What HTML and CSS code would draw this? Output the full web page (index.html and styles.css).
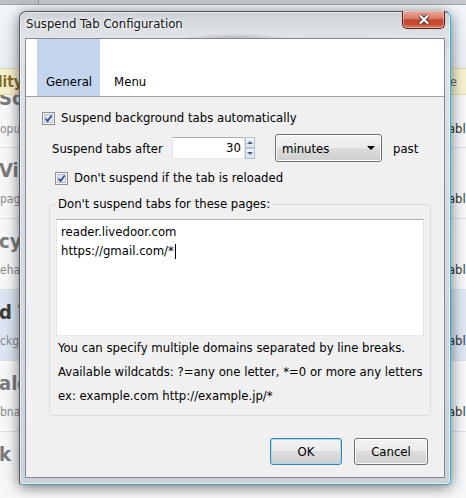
FILE: index.html
```html
<!DOCTYPE html>
<html lang="en">
<head>
    <meta charset="UTF-8">
    <meta name="viewport" content="width=device-width, initial-scale=1.0">
    <title>Suspend Tab Configuration</title>
    <link rel="stylesheet" href="styles.css">
</head>
<body>
    <!-- extensions page behind the dialog -->
    <div class="page">
        <div class="toolbar"><span class="tool"></span></div>
        <div class="blank"></div>
        <div class="notice"><span class="notice-text">lity</span><span class="notice-end">e</span></div>
        <div class="ext ext-first">
            <div class="ext-info"><div class="ext-name">Sc</div><div class="ext-desc">opu</div></div>
            <div class="ext-state">Enable</div>
        </div>
        <div class="ext">
            <div class="ext-info"><div class="ext-name">Vi</div><div class="ext-desc">pag</div></div>
            <div class="ext-state">Enable</div>
        </div>
        <div class="ext">
            <div class="ext-info"><div class="ext-name">cyl</div><div class="ext-desc">eha</div></div>
            <div class="ext-state">Enable</div>
        </div>
        <div class="ext ext-selected">
            <div class="ext-info"><div class="ext-name">d T</div><div class="ext-desc">ckg</div></div>
            <div class="ext-state">Enable</div>
        </div>
        <div class="ext">
            <div class="ext-info"><div class="ext-name">alo</div><div class="ext-desc">bna</div></div>
            <div class="ext-state">Enable</div>
        </div>
        <div class="ext">
            <div class="ext-info"><div class="ext-name">k</div></div>
        </div>
    </div>

    <div class="window">
        <div class="titlebar">
            <span class="title">Suspend Tab Configuration</span>
            <span class="close">
                <svg width="12" height="11" viewBox="0 0 12 11">
                    <path d="M2 1.5 L10 9.5 M10 1.5 L2 9.5" stroke="#4a3430" stroke-width="4.2"/>
                    <path d="M2 1.5 L10 9.5 M10 1.5 L2 9.5" stroke="#fff" stroke-width="2.2"/>
                </svg>
            </span>
        </div>
        <div class="client">
            <div class="tabs">
                <span class="tab tab-active">General</span>
                <span class="tab">Menu</span>
            </div>
            <div class="panel">
                <label class="option option-main">
                    <svg class="checkbox" width="13" height="13" viewBox="0 0 13 13">
                        <rect x="0.5" y="0.5" width="12" height="12" fill="#f6f6f6" stroke="#8f8f8f"/>
                        <rect x="2.5" y="2.5" width="8" height="8" fill="#e2e7ee" stroke="#b9c2cd"/>
                        <path d="M3.6 6.4 L5.6 9 L9.6 3.6" fill="none" stroke="#32479b" stroke-width="1.7"/>
                    </svg>
                    Suspend background tabs automatically
                </label>
                <div class="after-row">
                    <span class="after-label">Suspend tabs after</span>
                    <span class="spin">
                        <span class="spin-input">30</span>
                        <span class="spin-buttons">
                            <span class="spin-btn"><span class="arrow-up"></span></span>
                            <span class="spin-btn"><span class="arrow-down"></span></span>
                        </span>
                    </span>
                    <span class="unit-select">minutes<span class="select-arrow"></span></span>
                    <span class="past">past</span>
                </div>
                <label class="option option-sub">
                    <svg class="checkbox" width="13" height="13" viewBox="0 0 13 13">
                        <rect x="0.5" y="0.5" width="12" height="12" fill="#f6f6f6" stroke="#8f8f8f"/>
                        <rect x="2.5" y="2.5" width="8" height="8" fill="#e2e7ee" stroke="#b9c2cd"/>
                        <path d="M3.6 6.4 L5.6 9 L9.6 3.6" fill="none" stroke="#32479b" stroke-width="1.7"/>
                    </svg>
                    Don't suspend if the tab is reloaded
                </label>
                <fieldset class="exclude">
                    <legend>Don't suspend tabs for these pages:</legend>
                    <div class="exclude-list">reader.livedoor.com<br>https://gmail.com/*<span class="caret"></span></div>
                    <p class="hint">You can specify multiple domains separated by line breaks.</p>
                    <p class="hint">Available wildcatds: ?=any one letter, *=0 or more any letters</p>
                    <p class="hint">ex: example.com http://example.jp/*</p>
                </fieldset>
                <div class="buttons">
                    <button class="btn btn-ok">OK</button>
                    <button class="btn btn-cancel">Cancel</button>
                </div>
            </div>
        </div>
    </div>
</body>
</html>
```

FILE: styles.css
```css
body, html {
    margin: 0;
    height: 100%;
    overflow: hidden;
    font-family: "DejaVu Sans Condensed", "DejaVu Sans", sans-serif;
    font-size: 13px;
    color: #000;
}

/* page behind */
.page {
    height: 498px;
    display: flex;
    flex-direction: column;
    background: #f6f7f9;
    overflow: hidden;
}
.toolbar {
    height: 4px;
    flex: none;
    display: flex;
    background: #c6c9cc;
    border-bottom: 1px solid #a2a6aa;
}
.tool {
    width: 38px;
    border-right: 1px solid #8e9297;
    background: #bcc0c4;
}
.blank {
    height: 63px;
    flex: none;
    background: linear-gradient(#f3f6fa, #e8edf4);
}
.notice {
    height: 27px;
    flex: none;
    box-sizing: border-box;
    display: flex;
    justify-content: space-between;
    align-items: center;
    background: #f6f1cd;
    border-top: 1px solid #e4dba4;
    border-bottom: 1px solid #e4dba4;
    position: relative;
    z-index: 1;
}
.notice-text {
    font-weight: bold;
    font-size: 15px;
    color: #866b22;
    margin-left: -2px;
}
.notice-end {
    font-size: 13px;
    color: #666;
    margin-right: 9px;
}
.ext {
    height: 71px;
    flex: none;
    box-sizing: border-box;
    display: flex;
    justify-content: space-between;
    border-bottom: 1px solid #dde1e6;
    overflow: hidden;
}
.ext-first {
    height: 53px;
}
.ext-selected {
    background: #dce5f1;
}
.ext-info {
    padding-top: 10px;
}
.ext-first .ext-info {
    padding-top: 0;
    margin-top: -9px;
}
.ext-name {
    font-weight: bold;
    font-size: 20px;
    line-height: 24px;
    color: #7a7a7a;
    margin-left: -1px;
}
.ext-selected .ext-name {
    color: #3a3a3a;
}
.ext-desc {
    margin-top: 9px;
    line-height: 16px;
    font-size: 12px;
    color: #8a8a8a;
}
.ext-first .ext-desc {
    margin-top: 11px;
}
.ext-state {
    padding-top: 43px;
    line-height: 16px;
    font-size: 13px;
    color: #333;
    margin-right: -7px;
}
.ext-first .ext-state {
    padding-top: 26px;
}

/* dialog window */
.window {
    position: absolute;
    z-index: 2;
    left: 19px;
    top: 11px;
    width: 432px;
    height: 474px;
    box-sizing: border-box;
    padding: 0 5px 6px;
    display: flex;
    flex-direction: column;
    border: 1px solid #4f5964;
    border-right-color: #2ab6dd;
    border-bottom-color: #4f9bb8;
    border-radius: 7px 7px 3px 3px;
    background:
        radial-gradient(ellipse 70px 12px at 215px 33px, rgba(60, 60, 60, 0.55), rgba(60, 60, 60, 0)),
        radial-gradient(ellipse 150px 9px at 320px 33px, rgba(110, 110, 110, 0.35), rgba(110, 110, 110, 0)),
        linear-gradient(#cdd2d8, #e0e3e7 24px, #d5dae0 50%, #ccd2d9);
    box-shadow: inset 0 0 0 1px rgba(255, 255, 255, 0.55), 0 2px 14px rgba(0, 0, 0, 0.55);
}
.titlebar {
    height: 26px;
    flex: none;
    display: flex;
    justify-content: space-between;
    align-items: flex-start;
}
.title {
    margin: 4px 0 0 1px;
    line-height: 16px;
    color: #111;
    text-shadow: 0 0 6px #fff, 0 0 3px #fff;
}
.close {
    width: 43px;
    height: 18px;
    margin-top: -1px;
    box-sizing: border-box;
    display: flex;
    justify-content: center;
    align-items: center;
    border: 1px solid #56231b;
    border-top: none;
    border-radius: 0 0 5px 5px;
    background: linear-gradient(#eaa999, #d87b67 45%, #c3452f 52%, #c64f38 80%, #de8a6f);
    box-shadow: inset 0 0 0 1px rgba(255, 215, 205, 0.45);
}
.client {
    flex: 1;
    display: flex;
    flex-direction: column;
    border: 1px solid #858a91;
    background: #f0f0f0;
}
.tabs {
    height: 57px;
    flex: none;
    display: flex;
    padding-left: 11px;
    background: #fff;
    border-bottom: 1px solid #a0a0a0;
}
.tab {
    display: flex;
    align-items: flex-end;
    padding: 0 8px 6px 9px;
    line-height: 16px;
}
.tab + .tab {
    margin-left: 5px;
}
.tab-active {
    background: #c2d4ee;
}
.panel {
    flex: 1;
    display: flex;
    flex-direction: column;
    align-items: flex-start;
    padding: 14px 13px 0 16px;
}
.option {
    display: flex;
    align-items: center;
    gap: 6px;
    height: 14px;
    line-height: 14px;
}
.checkbox {
    flex: none;
}
.option-sub {
    margin: 9px 0 0 13px;
}
.after-row {
    display: flex;
    align-items: center;
    height: 28px;
    margin: 9px 0 0 10px;
}
.after-label {
    width: 120px;
}
.spin {
    display: flex;
    height: 22px;
}
.spin-input {
    width: 73px;
    box-sizing: border-box;
    padding-right: 3px;
    text-align: right;
    line-height: 20px;
    background: #fff;
    border: 1px solid #e2e3ea;
    border-top-color: #abadb3;
    border-bottom-color: #e3e9ef;
}
.spin-buttons {
    width: 10px;
    display: flex;
    flex-direction: column;
}
.spin-btn {
    flex: 1;
    display: flex;
    justify-content: center;
    align-items: center;
    box-sizing: border-box;
    border: 1px solid #b4c1d0;
    background: linear-gradient(#f3f6fa, #d9e3ee);
}
.arrow-up {
    border-left: 3px solid transparent;
    border-right: 3px solid transparent;
    border-bottom: 3px solid #4f6187;
}
.arrow-down {
    border-left: 3px solid transparent;
    border-right: 3px solid transparent;
    border-top: 3px solid #4f6187;
}
.unit-select {
    width: 107px;
    height: 28px;
    margin-left: 20px;
    box-sizing: border-box;
    display: flex;
    justify-content: space-between;
    align-items: center;
    padding: 0 6px;
    border: 1px solid #707070;
    border-radius: 3px;
    background: linear-gradient(#f2f2f2, #ebebeb 50%, #dddddd 50%, #cfcfcf);
    box-shadow: inset 0 0 0 1px #fcfcfc;
}
.select-arrow {
    border-left: 4px solid transparent;
    border-right: 4px solid transparent;
    border-top: 4px solid #000;
}
.past {
    margin-left: 11px;
}
.exclude {
    margin: 11px 0 0 7px;
    width: 382px;
    box-sizing: border-box;
    padding: 7px 5px 7px 6px;
    border: 1px solid #d5dfe5;
    border-radius: 3px;
}
.exclude legend {
    padding: 0 2px;
    line-height: 16px;
}
.exclude-list {
    width: 368px;
    height: 117px;
    box-sizing: border-box;
    padding: 2px 4px;
    line-height: 19px;
    background: #fff;
    border: 1px solid #dbdfe6;
    border-top-color: #abadb3;
    border-left-color: #e2e3ea;
    border-bottom-color: #e3e9ef;
}
.caret {
    display: inline-block;
    width: 1px;
    height: 15px;
    margin-left: 1px;
    vertical-align: -4px;
    background: #000;
}
.hint {
    margin: 0;
    padding-left: 2px;
    line-height: 24px;
    white-space: nowrap;
}
.buttons {
    align-self: stretch;
    display: flex;
    justify-content: flex-end;
    gap: 12px;
    margin-top: 22px;
    padding-right: 3px;
}
.btn {
    height: 27px;
    padding: 0;
    box-sizing: border-box;
    font: inherit;
    color: #000;
    border: 1px solid #707070;
    border-radius: 3px;
    background: linear-gradient(#f2f2f2, #ebebeb 50%, #dddddd 50%, #cfcfcf);
    box-shadow: inset 0 0 0 1px #fcfcfc;
}
.btn-ok {
    width: 72px;
    border-color: #3c7fb1;
    box-shadow: inset 0 0 0 1px #a9dcf4;
}
.btn-cancel {
    width: 74px;
}
```
